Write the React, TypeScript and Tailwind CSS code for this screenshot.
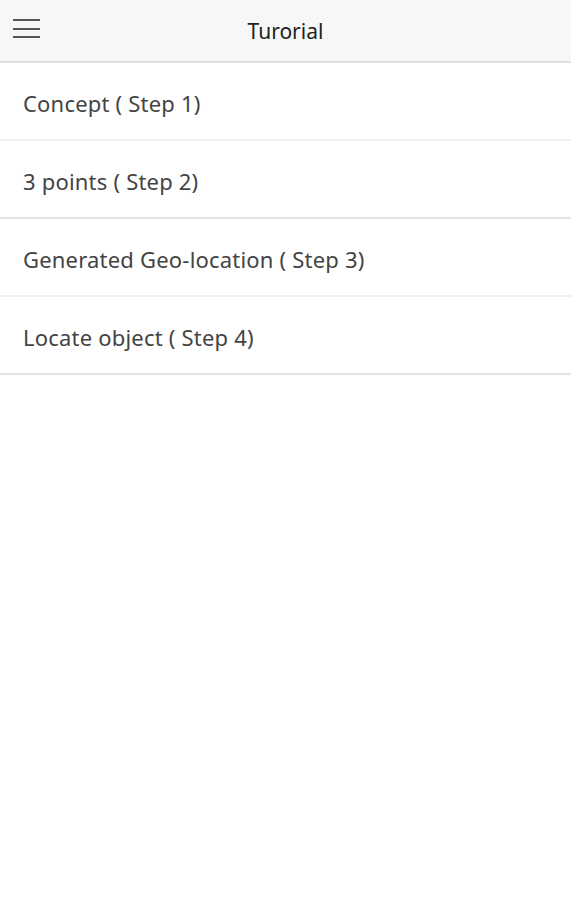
const STEPS = [
  'Concept ( Step 1)',
  '3 points ( Step 2)',
  'Generated Geo-location ( Step 3)',
  'Locate object ( Step 4)',
];

export default function App() {
  return (
    <div className="min-h-[900px] bg-white" style={{ fontFamily: '"Noto Sans", "Open Sans", sans-serif' }}>
      {/* Header */}
      <div className="relative h-[63px] bg-[#f7f7f7] border-b-2 border-[#dedede] flex items-center justify-center">
        <button className="absolute left-[13px] top-[19px] w-[27px] flex flex-col gap-[6.5px]">
          <span className="block h-[2px] bg-[#555]" />
          <span className="block h-[2px] bg-[#555]" />
          <span className="block h-[2px] bg-[#555]" />
        </button>
        <h1 className="pt-[3px] text-[21px] text-[#222]">Turorial</h1>
      </div>

      {/* List */}
      <div>
        {STEPS.map((s, i) => (
          <div
            key={s}
            className={`h-[78px] flex items-center pl-[23px] pt-[4px] text-[22px] tracking-[0.2px] text-[#444] border-b-2 ${i % 2 === 0 ? 'border-[#efefef]' : 'border-[#e3e3e3]'}`}
          >
            {s}
          </div>
        ))}
      </div>
    </div>
  );
}
